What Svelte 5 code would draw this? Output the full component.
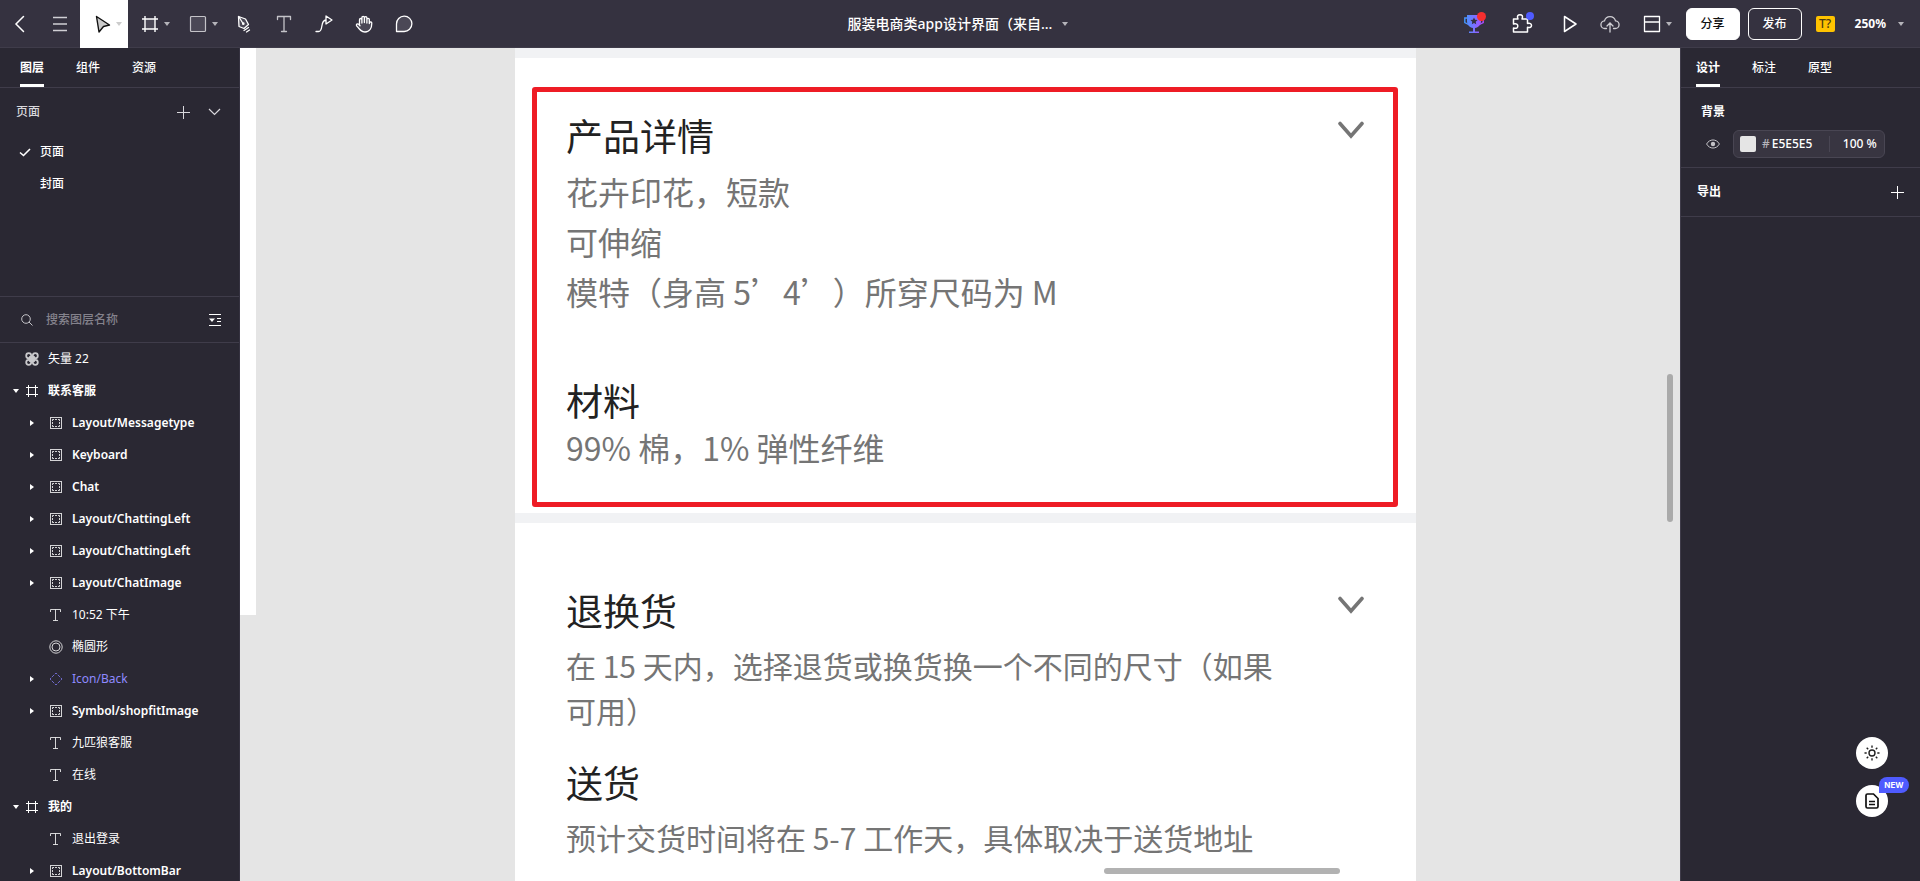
<script>
  const tools = [
    { id: 'pen', label: '钢笔' },
    { id: 'text', label: '文字' },
    { id: 'connect', label: '连线' },
    { id: 'hand', label: '抓手' },
    { id: 'comment', label: '评论' },
  ];
  const layers = [
    { name: '矢量 22', icon: 'vector', depth: 0 },
    { name: '联系客服', icon: 'frame', depth: 0, state: 'open' },
    { name: 'Layout/Messagetype', icon: 'group', depth: 1, state: 'closed' },
    { name: 'Keyboard', icon: 'group', depth: 1, state: 'closed' },
    { name: 'Chat', icon: 'group', depth: 1, state: 'closed' },
    { name: 'Layout/ChattingLeft', icon: 'group', depth: 1, state: 'closed' },
    { name: 'Layout/ChattingLeft', icon: 'group', depth: 1, state: 'closed' },
    { name: 'Layout/ChatImage', icon: 'group', depth: 1, state: 'closed' },
    { name: '10:52 下午', icon: 'text', depth: 1 },
    { name: '椭圆形', icon: 'ellipse', depth: 1 },
    { name: 'Icon/Back', icon: 'component', depth: 1, state: 'closed' },
    { name: 'Symbol/shopfitImage', icon: 'group', depth: 1, state: 'closed' },
    { name: '九匹狼客服', icon: 'text', depth: 1 },
    { name: '在线', icon: 'text', depth: 1 },
    { name: '我的', icon: 'frame', depth: 0, state: 'open' },
    { name: '退出登录', icon: 'text', depth: 1 },
    { name: 'Layout/BottomBar', icon: 'group', depth: 1, state: 'closed' },
  ];
</script>

{#snippet caret()}
  <svg class="caret" width="6" height="4" viewBox="0 0 6 4"><path d="M0 0h6L3 4z" fill="currentColor" /></svg>
{/snippet}

{#snippet plus()}
  <svg width="13" height="13" viewBox="0 0 13 13"><path d="M6.5 0v13M0 6.5h13" stroke="currentColor" /></svg>
{/snippet}

{#snippet down()}
  <svg class="down" width="26" height="19" viewBox="0 0 26 19" fill="none"><path d="M2 2.5 13 15 24 2.5" stroke="#757575" stroke-width="3.6" stroke-linecap="round" /></svg>
{/snippet}

{#snippet layerIcon(kind)}
  <svg width="14" height="14" viewBox="0 0 14 14" fill="none" stroke="currentColor">
    {#if kind === 'vector'}
      <g stroke-width="1.8" opacity=".75">
        <circle cx="3.7" cy="3.7" r="2.5" /><circle cx="10.3" cy="3.7" r="2.5" />
        <circle cx="3.7" cy="10.3" r="2.5" /><circle cx="10.3" cy="10.3" r="2.5" />
        <rect x="5" y="5" width="4" height="4" fill="currentColor" />
      </g>
    {:else if kind === 'frame'}
      <path d="M3.5 1v12M10.5 1v12M1 3.5h12M1 10.5h12" />
    {:else if kind === 'group'}
      <rect x="1.5" y="1.5" width="11" height="11" opacity=".8" />
      <path d="M3.5 5V3.5H5M6 3.500h2M9 3.500h1.500V5M10.500 6v2M10.500 9v1.500H9M8 10.500H6M5 10.500H3.500V9M3.500 8V6" opacity=".8" />
    {:else if kind === 'text'}
      <path d="M1.500 4V1.500h10V4M6.500 1.500v11M4 12.500h5" opacity=".8" />
    {:else if kind === 'ellipse'}
      <g opacity=".8"><circle cx="7" cy="7" r="6.200" /><circle cx="7" cy="7" r="4" /></g>
    {:else}
      <path d="M7 1 13 7 7 13 1 7z" stroke="#6d68c8" stroke-dasharray="3.200 1.043" stroke-dashoffset="1.600" />
    {/if}
  </svg>
{/snippet}

<div class="app">
  <header class="topbar">
    <nav class="tools" aria-label="工具">
      <button class="tool" aria-label="返回"><svg width="18" height="18" viewBox="0 0 18 18" fill="none"><path d="M12.500 1.500 5 9l7.500 7.500" stroke="currentColor" stroke-width="1.500" stroke-linecap="round" /></svg></button>
      <button class="tool dim" aria-label="菜单"><svg width="14" height="16" viewBox="0 0 14 16"><path d="M0 1.500h14M0 8h14M0 14.500h14" stroke="currentColor" stroke-width="1.300" /></svg></button>
      <button class="tool wide active" aria-label="选择">
        <svg width="18" height="18" viewBox="0 0 18 18"><path d="M3.500 1.500 16.500 10 10.500 11.500 6 17z" fill="#ccc" stroke="#111" stroke-width="1.400" stroke-linejoin="round" /></svg>
        {@render caret()}
      </button>
      <button class="tool wide" aria-label="画板">
        <svg width="18" height="18" viewBox="0 0 18 18"><path d="M4 4h10v10H4z" fill="#4b4856" /><path d="M4 1v16M14 1v16M1 4h16M1 14h16" stroke="currentColor" stroke-width="1.400" /></svg>
        {@render caret()}
      </button>
      <button class="tool wide" aria-label="矩形">
        <svg width="18" height="18" viewBox="0 0 18 18"><rect x="1.500" y="1.500" width="15" height="15" rx="1" fill="#4b4856" stroke="#c4c3c8" stroke-width="1.200" /></svg>
        {@render caret()}
      </button>
      {#each tools as tool}
        <button class="tool" aria-label={tool.label}>
          <svg width="18" height="18" viewBox="0 0 18 18" fill="none" stroke="currentColor" stroke-width="1.300" stroke-linejoin="round" stroke-linecap="round">
            {#if tool.id === 'pen'}
              <path d="M3.500 1.500 10.500 4 13.500 9.500 9 13.500 4 11.500z" fill="#4b4856" /><path d="m4 2 4 6.500M9 15.500l4.500-3M11.500 17l3-2" /><circle cx="8.300" cy="8.700" r=".7" />
            {:else if tool.id === 'text'}
              <path d="M2.500 4.500v-3h13v3M9 1.500v15M6.500 16.500h5" stroke="#c4c3c8" />
            {:else if tool.id === 'connect'}
              <path d="M1 16.500h2.500C9 16.500 4.500 5.500 11 5M11 1l6 4-6 4z" />
            {:else if tool.id === 'hand'}
              <path d="M4.500 9.500V4.700a1.200 1.200 0 0 1 2.400 0V8 2.700a1.200 1.200 0 0 1 2.500 0V7.500 2.900a1.200 1.200 0 0 1 2.500 0V8 4.500a1.200 1.200 0 0 1 2.400 0V8.500l.2-.8a1.200 1.200 0 0 1 2.300.6C16.800 12.500 15 17 10 17c-4 0-5.500-2.500-8.300-6.200-1-1.400.8-2.600 2-1.500L5 10.800" fill="#4b4856" />
            {:else}
              <path d="M1.500 16.500V9A7.700 7.700 0 1 1 9 16.500z" fill="#4b4856" />
            {/if}
          </svg>
        </button>
      {/each}
    </nav>

    <button class="title">服装电商类app设计界面（来自... {@render caret()}</button>

    <div class="actions">
      <button class="tool wide center" aria-label="活动">
        <svg width="24" height="24" viewBox="0 0 24 24" fill="none">
          <defs><linearGradient id="cup" x1="2" x2="22" y1="0" y2="0" gradientUnits="userSpaceOnUse"><stop stop-color="#3f9bff" /><stop offset="1" stop-color="#b347ff" /></linearGradient></defs>
          <path d="M5 3h14v6c0 4-2.500 6.500-6 7v3.500h4V21H7v-1.500h4V16c-3.500-.5-6-3-6-7z" fill="url(#cup)" />
          <path d="M6 6H2.800v4.500L6.500 12.500M18 6h3.200v4.500L17.500 12.500" stroke="url(#cup)" stroke-width="1.400" />
          <path d="m12 5.500 1.100 2.300 2.500.3-1.900 1.700.5 2.500-2.200-1.200-2.200 1.200.5-2.500-1.900-1.700 2.500-.3z" fill="#353240" />
          <circle cx="19.500" cy="4.500" r="4.500" fill="#f52f2f" />
        </svg>
      </button>
      <button class="tool wide center" aria-label="插件">
        <svg width="24" height="24" viewBox="0 0 24 24" fill="none">
          <path d="M3.500 7H8C6.800 4 8 2.700 10 2.700S13.200 4 12 7h5.500v4.500c2.500-.7 4 .2 4 1.900s-1.500 2.600-4 1.800v4.800h-14V16c3 1 4.300-.2 4.300-1.900S6.500 11 3.500 12z" stroke="currentColor" stroke-width="1.500" stroke-linejoin="round" />
          <circle cx="20" cy="4" r="4" fill="#4f5bff" />
        </svg>
      </button>
      <button class="tool play" aria-label="预览"><svg width="18" height="18" viewBox="0 0 18 18" fill="none"><path d="M3.500 1.500 15 9 3.500 16.500z" stroke="currentColor" stroke-width="1.500" stroke-linejoin="round" /></svg></button>
      <button class="tool dim" aria-label="上传"><svg width="20" height="18" viewBox="0 0 20 18" fill="none" stroke="currentColor" stroke-width="1.300" stroke-linecap="round"><path d="M6.500 13.500H5a3.800 3.800 0 0 1-.5-7.600 5.700 5.700 0 0 1 11 0A3.800 3.800 0 0 1 15 13.500h-1.500M10 17V8.500M7 11l3-3 3 3" /></svg></button>
      <button class="tool wide" aria-label="布局">
        <svg width="18" height="18" viewBox="0 0 18 18" fill="none"><path d="M1.500 1.500h15v15h-15zM1.500 7h15" stroke="currentColor" stroke-width="1.300" stroke-linejoin="round" /></svg>
        {@render caret()}
      </button>
      <button class="pill solid">分享</button>
      <button class="pill">发布</button>
      <button class="missing">T?</button>
      <button class="zoom">250% {@render caret()}</button>
    </div>
  </header>

  <div class="workspace">
    <aside class="left">
      <nav class="tabs">
        <button class="tab on">图层</button><button class="tab">组件</button><button class="tab">资源</button>
      </nav>
      <section class="pages">
        <div class="pages-head">
          <span>页面</span>
          <button class="plain" aria-label="新建页面">{@render plus()}</button>
          <button class="plain" aria-label="收起"><svg width="13" height="8" viewBox="0 0 13 8" fill="none"><path d="m1 1 5.500 5.500L12 1" stroke="currentColor" stroke-width="1.200" /></svg></button>
        </div>
        <button class="page"><svg width="12" height="9" viewBox="0 0 12 9" fill="none"><path d="m1 4.500 3.500 3L11 1" stroke="currentColor" stroke-width="1.600" /></svg>页面</button>
        <button class="page"><span class="blank"></span>封面</button>
      </section>
      <div class="search">
        <svg width="12" height="12" viewBox="0 0 12 12" fill="none" stroke="#c4c3c8"><circle cx="5" cy="5" r="4.300" /><path d="m8 8 3.500 3.500" /></svg>
        <input type="text" aria-label="搜索图层名称" placeholder="搜索图层名称" />
        <button class="plain" aria-label="折叠图层"><svg width="12" height="12" viewBox="0 0 12 12"><path d="M0 .5h12M0 11.500h12M8 4.500h4M8 7.500h4" stroke="currentColor" /><path d="M0 4.500h6L3 8z" fill="currentColor" /></svg></button>
      </div>
      <ul class="layers">
        {#each layers as layer}
          <li class:child={layer.depth === 1} class:group={layer.icon === 'group'} class:bold={layer.icon === 'frame'} class:linked={layer.icon === 'component'}>
            <span class="toggle">
              {#if layer.state === 'open'}
                {@render caret()}
              {:else if layer.state === 'closed'}
                <svg width="4" height="6" viewBox="0 0 4 6"><path d="M0 0v6l4-3z" fill="#fff" /></svg>
              {/if}
            </span>
            {@render layerIcon(layer.icon)}
            <span>{layer.name}</span>
          </li>
        {/each}
      </ul>
    </aside>

    <main class="canvas">
      <div class="neighbour"></div>
      <article class="artboard">
        <section class="card marked">
          <div class="heading"><h2>产品详情</h2>{@render down()}</div>
          <p>花卉印花，短款</p>
          <p>可伸缩</p>
          <p>模特（身高 5’4’）所穿尺码为 M</p>
          <h2 class="material">材料</h2>
          <p class="fabric">99% 棉，1% 弹性纤维</p>
        </section>
        <section class="card policy">
          <div class="heading"><h2>退换货</h2>{@render down()}</div>
          <p>在 15 天内，选择退货或换货换一个不同的尺寸（如果可用）</p>
          <h2 class="delivery">送货</h2>
          <p>预计交货时间将在 5-7 工作天，具体取决于送货地址</p>
        </section>
      </article>
      <div class="scroll vertical"></div>
      <div class="scroll horizontal"></div>
    </main>

    <aside class="right">
      <nav class="tabs">
        <button class="tab on">设计</button><button class="tab">标注</button><button class="tab">原型</button>
      </nav>
      <section class="background">
        <h3>背景</h3>
        <div class="fill">
          <button class="plain" aria-label="显示背景"><svg width="14" height="10" viewBox="0 0 14 10" fill="none"><path d="M.6 5C3.500-.4 10.500-.4 13.400 5 10.500 10.400 3.500 10.400.6 5z" stroke="#c4c3c8" /><circle cx="7" cy="5" r="2.200" fill="#c4c3c8" /></svg></button>
          <div class="field">
            <span class="swatch"></span><span class="hash">#</span>
            <input class="hex" type="text" aria-label="颜色" value="E5E5E5" />
            <input class="alpha" type="text" aria-label="不透明度" value="100 %" />
          </div>
        </div>
      </section>
      <section class="export">
        <h3>导出</h3>
        <button class="plain" aria-label="添加导出">{@render plus()}</button>
      </section>
      <div class="floating">
        <button class="round" aria-label="主题">
          <svg width="16" height="16" viewBox="0 0 16 16" fill="none" stroke="#222" stroke-width="1.400"><circle cx="8" cy="8" r="3" /><path d="M8 .5v2.200M8 13.300v2.200M.5 8h2.200M13.300 8h2.200M2.700 2.700l1.500 1.500M11.800 11.800l1.500 1.500M13.300 2.700l-1.500 1.500M4.200 11.800l-1.500 1.500" /></svg>
        </button>
        <button class="round" aria-label="文档">
          <svg width="14" height="16" viewBox="0 0 14 16" fill="none" stroke="#111" stroke-width="1.700"><path d="M2.500 1h6L13 5.500v8A1.500 1.500 0 0 1 11.500 15h-9A1.500 1.500 0 0 1 1 13.500v-11A1.500 1.500 0 0 1 2.500 1z" /><path d="M4 8.500h6M4 11.500h6" stroke-width="1.400" /></svg>
          <span class="new">NEW</span>
        </button>
      </div>
    </aside>
  </div>
</div>

<style>
  :global(body) { margin: 0; }
  * { box-sizing: border-box; }
  svg { display: block; flex: none; }
  button { border: 0; padding: 0; background: none; color: inherit; font: inherit; cursor: pointer; }
  input { border: 0; padding: 0; outline: 0; background: none; color: inherit; font: inherit; min-width: 0; }
  h2, h3, p, ul { margin: 0; padding: 0; font-weight: 400; }

  .app {
    display: flex;
    flex-direction: column;
    height: 100vh;
    overflow: hidden;
    color: #fff;
    font: 500 12px/16px "Noto Sans", "Noto Sans CJK SC", sans-serif;
  }

  .topbar {
    display: grid;
    grid-template-columns: 1fr auto 1fr;
    flex: none;
    height: 48px;
    background: #353240;
    box-shadow: inset 0 -1px #3f3c4a;
  }
  .tools, .actions { display: flex; align-items: center; }
  .actions { justify-content: flex-end; padding-right: 16px; }
  .tool { display: flex; align-items: center; justify-content: center; width: 40px; height: 48px; }
  .tool.dim { color: #d0cfd4; }
  .tool.wide { width: 48px; justify-content: flex-start; padding-left: 13px; gap: 5px; }
  .tool.center { justify-content: center; padding: 0; }
  .tool.play { margin-left: 4px; }
  .tool.active { background: #fff; }
  .tool .caret, .title .caret, .zoom .caret { color: #b5b4ba; }
  .tool.active .caret { color: #ccc; }
  .title { display: flex; align-items: center; gap: 10px; padding-right: 4px; font-size: 14px; }
  .pill { width: 54px; height: 32px; border: 1px solid #fff; border-radius: 6px; margin-right: 8px; }
  .pill.solid { margin-left: 8px; background: #fff; color: #111; }
  .missing { width: 19px; height: 16px; margin: 0 20px 0 6px; border-radius: 2px; background: #ffc300; color: #4a3a10; }
  .zoom { display: flex; align-items: center; gap: 12px; font-weight: 700; }

  .workspace { display: flex; flex: 1; min-height: 0; }
  .left, .right { display: flex; flex-direction: column; flex: none; width: 240px; background: #2a2833; overflow: hidden; }
  .left { border-right: 1px solid #353240; }
  .right { position: relative; border-left: 1px solid #3f3c4a; }
  .tabs { display: flex; flex: none; gap: 32px; height: 40px; padding-left: 20px; border-bottom: 1px solid #3f3c4a; }
  .right .tabs { padding-left: 15px; }
  .tab { border-bottom: 3px solid transparent; padding-top: 3px; }
  .tab.on { font-weight: 700; border-color: #fff; }
  .plain { display: flex; align-items: center; justify-content: center; }

  .pages { flex: none; height: 209px; border-bottom: 1px solid #3f3c4a; }
  .pages-head { display: flex; align-items: center; gap: 18px; height: 48px; padding: 0 18px 0 16px; color: #d8d7dc; }
  .pages-head span { flex: 1; }
  .page { display: flex; align-items: center; gap: 9px; width: 100%; height: 32px; padding-left: 19px; }
  .blank { width: 12px; }

  .search { display: flex; align-items: center; flex: none; gap: 13px; height: 46px; padding: 0 18px 0 21px; border-bottom: 1px solid #3f3c4a; }
  .search input { flex: 1; font-size: 12px; }
  .search input::placeholder { color: #84828c; opacity: 1; }

  .layers { list-style: none; }
  .layers li { display: flex; align-items: center; height: 32px; padding-left: 13px; white-space: nowrap; }
  .layers .child { padding-left: 30px; }
  .layers .toggle { width: 12px; flex: none; }
  .layers .child .toggle { width: 19px; }
  .layers li > span:last-child { margin-left: 9px; }
  .layers .group { font-weight: 600; }
  .layers .bold { font-weight: 700; }
  .layers .linked { color: #8f8aff; }

  .canvas {
    position: relative;
    display: flex;
    flex: 1;
    min-width: 0;
    overflow: hidden;
    padding-right: 264px;
    background: #e5e5e5;
  }
  .neighbour { flex: none; width: 16px; height: 567px; margin-right: 259px; background: #fff; }
  .artboard {
    flex: 1;
    min-width: 0;
    background: #fff;
    color: #222;
    font-family: "Noto Sans CJK SC", sans-serif;
    font-weight: 400;
  }
  .card { border-top: 10px solid #f1f2f4; padding: 53px 52px 0 51px; }
  .marked { display: flow-root; height: 465px; position: relative; text-spacing-trim: space-all; }
  .marked::after {
    content: "";
    position: absolute;
    inset: 29px 18px 6px 17px;
    border: 5px solid #ee1c25;
    border-radius: 3px;
  }
  .heading { display: flex; justify-content: space-between; }
  .down { margin-top: 10px; }
  h2 { font-size: 37px; line-height: 48px; }
  .card p { font-size: 32px; line-height: 50px; color: #757575; }
  .heading + p { margin-top: 7px; }
  .card .material { margin-top: 60px; }
  .card .fabric { line-height: 46px; }
  .policy { padding-top: 63px; }
  .policy p { max-width: 720px; margin-top: 9px; font-size: 30px; line-height: 45px; }
  .policy .delivery { margin-top: 25px; }

  .scroll { position: absolute; border-radius: 3px; background: #aaa; }
  .vertical { right: 7px; top: 326px; width: 6px; height: 148px; }
  .horizontal { right: 340px; bottom: 7px; width: 236px; height: 6px; background: #b2b2b2; }

  h3 { font-size: 12px; font-weight: 700; }
  .background { height: 80px; padding: 16px 0 0 20px; border-bottom: 1px solid #3f3c4a; }
  .fill { display: flex; align-items: center; gap: 13px; margin: 10px 0 0 5px; }
  .field {
    display: flex;
    align-items: center;
    width: 152px;
    height: 28px;
    padding-left: 6px;
    border: 1px solid #494653;
    border-radius: 6px;
    background: #383541;
  }
  .swatch { width: 16px; height: 16px; border-radius: 2px; background: #e5e5e5; }
  .hash { margin: 0 2px 0 6px; color: #b5b4ba; }
  .hex { width: 57px; }
  .alpha { width: 50px; border-left: 1px solid #494653; padding-left: 13px; }
  .export { display: flex; align-items: center; justify-content: space-between; height: 49px; padding: 0 16px; border-bottom: 1px solid #3f3c4a; }

  .floating { position: absolute; right: 32px; bottom: 64px; display: grid; gap: 16px; }
  .round { position: relative; display: flex; align-items: center; justify-content: center; width: 32px; height: 32px; border-radius: 50%; background: #fff; }
  .new {
    position: absolute;
    left: 23px;
    top: -8px;
    width: 30px;
    border-radius: 8px 8px 8px 0;
    background: #4f5bff;
    color: #fff;
    font: 700 8px/16px Inter, sans-serif;
  }
</style>
